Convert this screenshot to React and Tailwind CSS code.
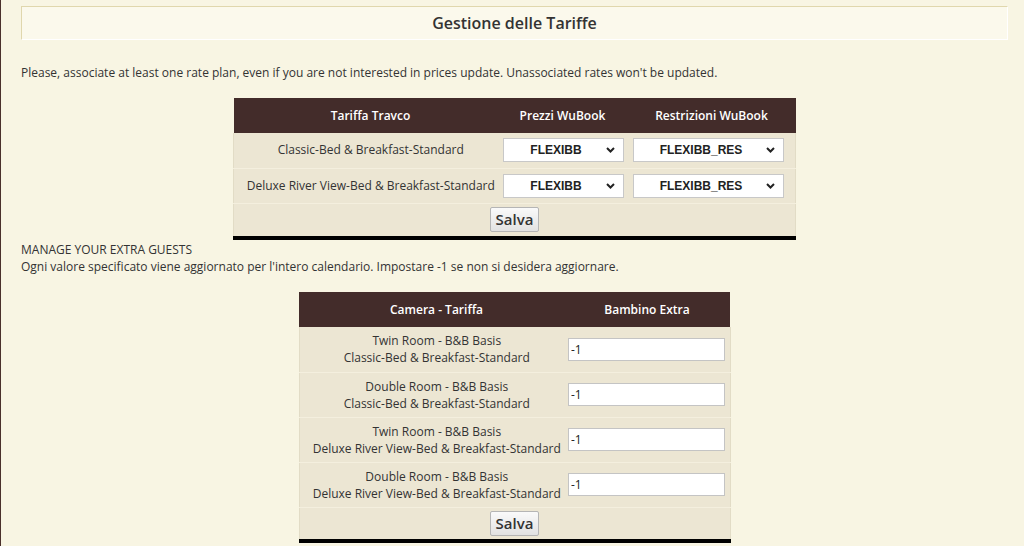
import React from "react";

const font = { fontFamily: "'Open Sans', 'Noto Sans', sans-serif" };

function Chevron() {
  return (
    <svg width="9" height="7" viewBox="0 0 9 7" className="absolute right-[8px] top-1/2 -translate-y-1/2">
      <path d="M1 1.5 L4.5 5 L8 1.5" fill="none" stroke="#222" strokeWidth="2" />
    </svg>
  );
}

function FakeSelect({ value, w }) {
  return (
    <div
      className={`relative h-[24px] bg-white border border-[#c8c8c8] flex items-center justify-center pr-[14px] text-[12px] font-bold text-[#222] ${w}`}
      style={{ fontFamily: "'Liberation Sans', Arial, sans-serif" }}
    >
      {value}
      <Chevron />
    </div>
  );
}

function SaveButton() {
  return (
    <button className="h-[25px] px-[5px] rounded-[2px] border border-[#b5b5b5] bg-gradient-to-b from-[#fafafa] to-[#e2e2e2] text-[15px] font-semibold text-[#333] leading-none">
      Salva
    </button>
  );
}

export default function App() {
  const rates = [
    "Classic-Bed & Breakfast-Standard",
    "Deluxe River View-Bed & Breakfast-Standard",
  ];
  const extras = [
    ["Twin Room - B&B Basis", "Classic-Bed & Breakfast-Standard"],
    ["Double Room - B&B Basis", "Classic-Bed & Breakfast-Standard"],
    ["Twin Room - B&B Basis", "Deluxe River View-Bed & Breakfast-Standard"],
    ["Double Room - B&B Basis", "Deluxe River View-Bed & Breakfast-Standard"],
  ];
  return (
    <div
      className="w-[1024px] h-[546px] overflow-hidden bg-[#f8f5e3] border-l border-[#4a302c] pl-[20px] pr-[16px] pt-[6px] text-[#333]"
      style={font}
    >
      <div className="h-[34px] bg-[#fbf9ec] border-t border-l border-[#e0d7ad] border-r border-b border-r-white border-b-white flex items-center justify-center">
        <h1 className="text-[16px] font-semibold text-[#333]">Gestione delle Tariffe</h1>
      </div>

      <p className="mt-[24px] text-[12px] leading-[17px]">
        Please, associate at least one rate plan, even if you are not interested in prices update. Unassociated rates won't be updated.
      </p>

      <div className="mt-[17px] flex justify-center">
        <table className="w-[563px] border-collapse text-[12px] border-b-[4px] border-b-black">
          <thead>
            <tr className="h-[35px] bg-[#432c2a] text-white">
              <th className="w-[264px] font-semibold pl-[10px]">Tariffa Travco</th>
              <th className="w-[130px] font-semibold">Prezzi WuBook</th>
              <th className="font-semibold">Restrizioni WuBook</th>
            </tr>
          </thead>
          <tbody className="bg-[#ece6d3] border-x border-x-[#e2dcc6]">
            {rates.map((r) => (
              <tr key={r} className="h-[35px] border-b border-b-[#f4efde]">
                <td className="text-center pl-[10px] whitespace-nowrap">{r}</td>
                <td className="pl-[5px]">
                  <FakeSelect value="FLEXIBB" w="w-[121px]" />
                </td>
                <td className="pl-[5px]">
                  <FakeSelect value="FLEXIBB_RES" w="w-[151px]" />
                </td>
              </tr>
            ))}
            <tr className="h-[35px]">
              <td colSpan={3} className="text-center">
                <SaveButton />
              </td>
            </tr>
          </tbody>
        </table>
      </div>

      <p className="mt-[1px] text-[12px] leading-[17px]">MANAGE YOUR EXTRA GUESTS</p>
      <p className="text-[12px] leading-[17px]">
        Ogni valore specificato viene aggiornato per l'intero calendario. Impostare -1 se non si desidera aggiornare.
      </p>

      <div className="mt-[17px] flex justify-center">
        <table className="w-[432px] border-collapse text-[12px] border-b-[4px] border-b-black">
          <thead>
            <tr className="h-[35px] bg-[#432c2a] text-white">
              <th className="w-[265px] font-semibold pl-[10px]">Camera - Tariffa</th>
              <th className="font-semibold">Bambino Extra</th>
            </tr>
          </thead>
          <tbody className="bg-[#ece6d3] border-x border-x-[#e2dcc6]">
            {extras.map(([a, b], i) => (
              <tr key={i} className="h-[45px] border-b border-b-[#f4efde]">
                <td className="text-center pl-[10px] leading-[17px] whitespace-nowrap">
                  <div>{a}</div>
                  <div>{b}</div>
                </td>
                <td className="pl-[4px]">
                  <input
                    readOnly
                    value="-1"
                    className="w-[157px] h-[23px] bg-white border border-[#c4c4c4] px-[2px] text-[12px] text-[#222] outline-none"
                    style={font}
                  />
                </td>
              </tr>
            ))}
            <tr className="h-[34px]">
              <td colSpan={2} className="text-center">
                <SaveButton />
              </td>
            </tr>
          </tbody>
        </table>
      </div>
    </div>
  );
}
